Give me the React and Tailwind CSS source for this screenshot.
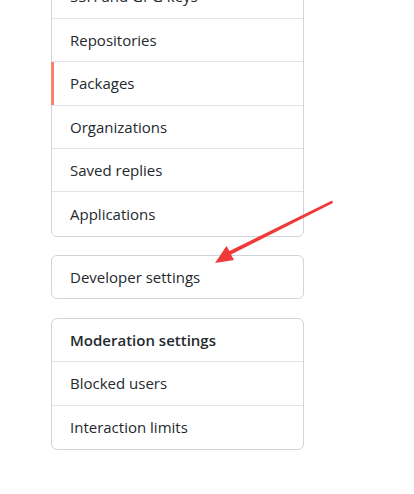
import React from 'react';

// Settings sidebar fragment with a red annotation arrow

const accountItems = [
    { label: 'SSH and GPG keys' },
    { label: 'Repositories' },
    { label: 'Packages', active: true },
    { label: 'Organizations' },
    { label: 'Saved replies' },
    { label: 'Applications' },
];

const moderationItems = ['Blocked users', 'Interaction limits'];

const MenuRow = ({ label, active, bold, last, short }) => (
    <div
        className={`relative flex items-center ${short ? 'h-[42px]' : 'h-[43.4px]'} px-[18px] text-[15px] text-[#24292e] ${bold ? 'font-semibold' : ''} ${last ? '' : 'border-b border-[#e1e4e8]'}`}
    >
        {active && <span className="absolute -left-px top-0 bottom-0 w-[3px] bg-[#f9826c]"></span>}
        {label}
    </div>
);

const Arrow = () => (
    <svg className="absolute left-0 top-0 pointer-events-none" width="414" height="494" viewBox="0 0 414 494">
        <polygon points="332,200.5 333,203 231,254.5 234,260 215,263 226.5,246 229.5,251" fill="#f03a3a" />
    </svg>
);

const App = () => {
    return (
        <div className="relative w-[414px] h-[494px] bg-white overflow-hidden" style={{ fontFamily: '"Open Sans", "Noto Sans", sans-serif' }}>
            <div className="ml-[51px] w-[253px] -mt-[25.5px] flex flex-col">
                <nav className="border border-[#d1d5da] rounded-md">
                    {accountItems.map((item, i) => (
                        <MenuRow key={item.label} label={item.label} active={item.active} last={i === accountItems.length - 1} />
                    ))}
                </nav>

                <nav className="mt-[18px] border border-[#d1d5da] rounded-md">
                    <MenuRow label="Developer settings" last short />
                </nav>

                <nav className="mt-[19px] border border-[#d1d5da] rounded-md">
                    <MenuRow label="Moderation settings" bold />
                    {moderationItems.map((label, i) => (
                        <MenuRow key={label} label={label} last={i === moderationItems.length - 1} />
                    ))}
                </nav>
            </div>
            <Arrow />
        </div>
    );
};

export default App;
